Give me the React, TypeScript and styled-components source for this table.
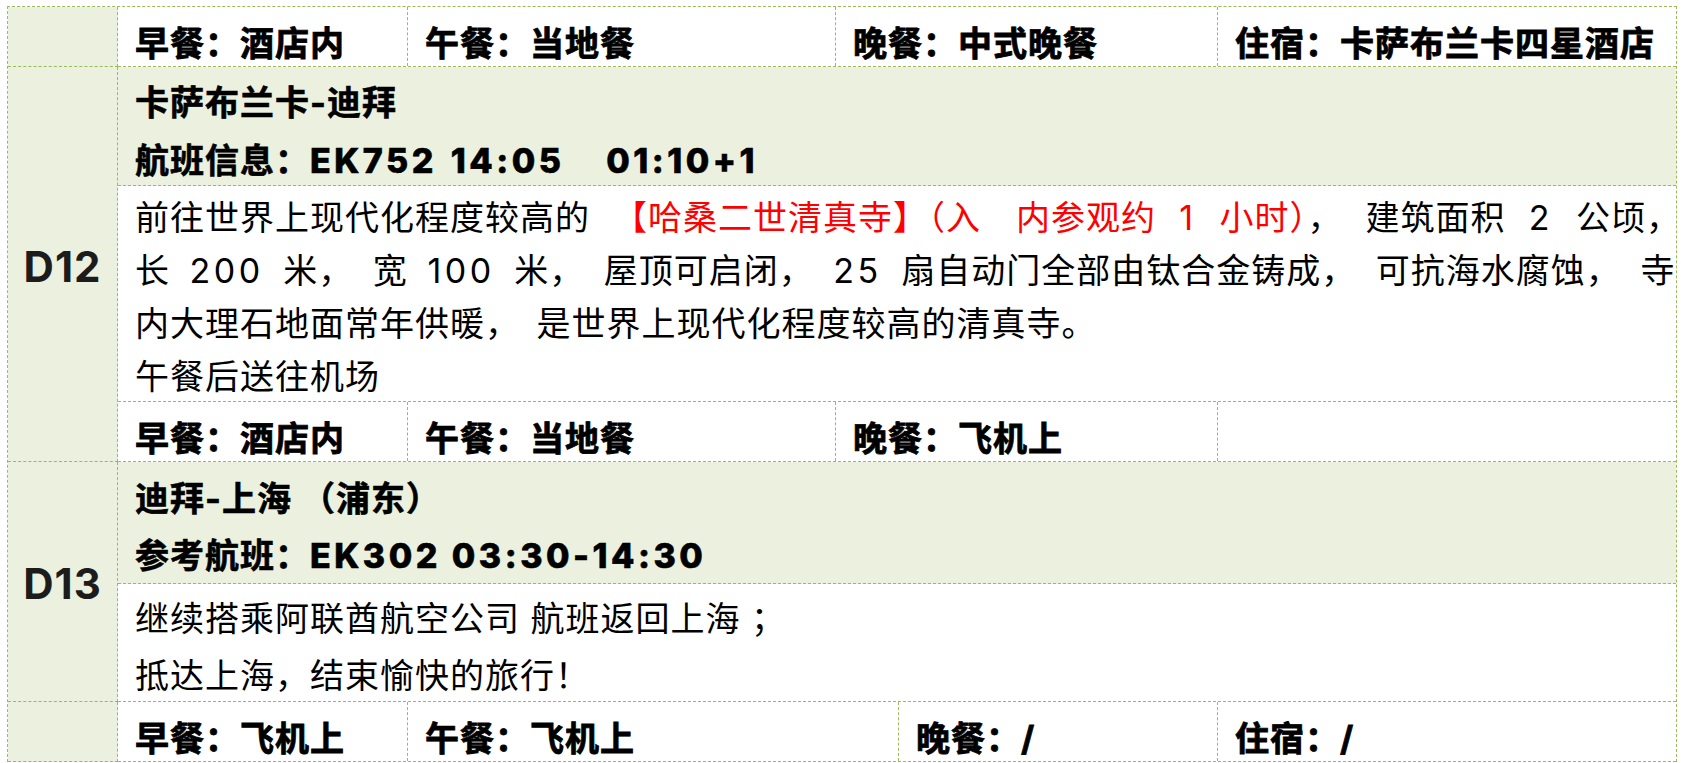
import React from 'react';
import styled, { createGlobalStyle } from 'styled-components';

const GlobalStyle = createGlobalStyle`
  html, body {
    margin: 0;
    padding: 0;
    background: #fff;
  }
  body {
    font-family: Inter, "Noto Sans CJK SC", sans-serif;
    color: #000;
  }
`;

const line = '1px dashed #9bbb59';
const green = '#ebf1de';

const Table = styled.div`
  margin: 6px 0 0 7px;
  width: 1670px;
  box-sizing: border-box;
  border-top: ${line};
  border-left: ${line};
  border-right: ${line};
  font-size: 34px;
  letter-spacing: 1px;
`;

const DayBlock = styled.div`
  display: flex;
`;

const DayCell = styled.div`
  width: 110px;
  flex: none;
  box-sizing: border-box;
  background: ${green};
  border-right: ${line};
  border-bottom: ${line};
  display: flex;
  align-items: center;
  justify-content: center;
  font-weight: 700;
  font-size: 42px;
  letter-spacing: 1px;
  color: #1c1c1c;
  padding-top: 4px;
`;

const DayBody = styled.div`
  flex: 1;
  display: flex;
  flex-direction: column;
  min-width: 0;
`;

const Header = styled.div<{ $h: number; $lh: number; $pt: number }>`
  height: ${({ $h }) => $h}px;
  box-sizing: border-box;
  padding: ${({ $pt }) => $pt}px 0 0 17px;
  line-height: ${({ $lh }) => $lh}px;
  background: ${green};
  border-bottom: ${line};
  font-weight: 700;
  -webkit-text-stroke: 0.6px #000;
  white-space: pre;
`;

const Desc = styled.div<{ $h: number; $lh: number; $pt: number }>`
  height: ${({ $h }) => $h}px;
  box-sizing: border-box;
  padding: ${({ $pt }) => $pt}px 0 0 17px;
  line-height: ${({ $lh }) => $lh}px;
  border-bottom: ${line};
  white-space: pre;
`;

const TextLine = styled.div<{ $ws?: number }>`
  word-spacing: ${({ $ws }) => $ws ?? 0}px;
`;

const Latin = styled.span<{ $bold?: boolean; $ws?: number }>`
  letter-spacing: 3.5px;
  word-spacing: ${({ $ws }) => ($ws ? `${$ws}px` : 'inherit')};
  font-weight: ${({ $bold }) => ($bold ? 800 : 'inherit')};
`;

const Red = styled.span`
  color: #ff0000;
`;

const MealRow = styled.div<{ $cols: string }>`
  height: 60px;
  box-sizing: border-box;
  display: grid;
  grid-template-columns: ${({ $cols }) => $cols};
  border-bottom: ${line};
`;

const MealCell = styled.div`
  display: flex;
  align-items: center;
  padding: 9px 0 0 17px;
  font-weight: 700;
  -webkit-text-stroke: 0.8px #000;
  white-space: nowrap;
  border-right: ${line};
  &:last-child {
    border-right: none;
  }
`;

const standardCols = '290px 428px 382px 1fr';
const lastCols = '290px 491px 319px 1fr';

function Meals({ cols, items }: { cols: string; items: string[] }) {
  return (
    <MealRow $cols={cols}>
      {items.map((t, i) => (
        <MealCell key={i}>{t}</MealCell>
      ))}
    </MealRow>
  );
}

export default function App() {
  return (
    <>
      <GlobalStyle />
      <Table>
        <DayBlock>
          <DayCell />
          <DayBody>
            <Meals cols={standardCols} items={['早餐：酒店内', '午餐：当地餐', '晚餐：中式晚餐', '住宿：卡萨布兰卡四星酒店']} />
          </DayBody>
        </DayBlock>

        <DayBlock>
          <DayCell>D12</DayCell>
          <DayBody>
            <Header $h={119} $lh={58} $pt={7}>
              <div>卡萨布兰卡-迪拜</div>
              <div>
                航班信息：<Latin $bold $ws={3}>EK752 14:05   01:10+1</Latin>
              </div>
            </Header>
            <Desc $h={216} $lh={53} $pt={5}>
              <TextLine $ws={12.5}>
                前往世界上现代化程度较高的 <Red>【哈桑二世清真寺】（入　内参观约 <Latin>1</Latin> 小时）</Red>， 建筑面积 <Latin>2</Latin> 公顷，
              </TextLine>
              <TextLine $ws={9}>
                长 <Latin>200</Latin> 米， 宽 <Latin>100</Latin> 米， 屋顶可启闭， <Latin>25</Latin> 扇自动门全部由钛合金铸成， 可抗海水腐蚀， 寺
              </TextLine>
              <TextLine $ws={6}>内大理石地面常年供暖， 是世界上现代化程度较高的清真寺。</TextLine>
              <TextLine>午餐后送往机场</TextLine>
            </Desc>
            <Meals cols={standardCols} items={['早餐：酒店内', '午餐：当地餐', '晚餐：飞机上', '']} />
          </DayBody>
        </DayBlock>

        <DayBlock>
          <DayCell>D13</DayCell>
          <DayBody>
            <Header $h={122} $lh={57} $pt={8}>
              <div>迪拜-上海 （浦东）</div>
              <div>
                参考航班：<Latin $bold>EK302 03:30-14:30</Latin>
              </div>
            </Header>
            <Desc $h={118} $lh={57} $pt={6}>
              <TextLine>继续搭乘阿联酋航空公司 航班返回上海 ；</TextLine>
              <TextLine>抵达上海，结束愉快的旅行！</TextLine>
            </Desc>
          </DayBody>
        </DayBlock>

        <DayBlock>
          <DayCell />
          <DayBody>
            <Meals cols={lastCols} items={['早餐：飞机上', '午餐：飞机上', '晚餐：/', '住宿：/']} />
          </DayBody>
        </DayBlock>
      </Table>
    </>
  );
}
